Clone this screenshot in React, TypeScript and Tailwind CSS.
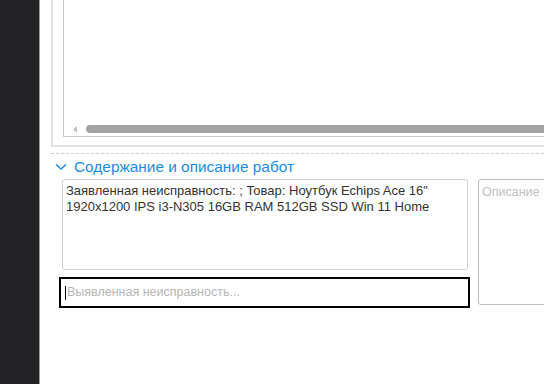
import React from 'react';

export default function App() {
  return (
    <div className="flex h-[384px] w-[544px] overflow-hidden bg-white font-['Liberation_Sans',Arial,sans-serif]">
      {/* sidebar */}
      <div className="w-[40px] shrink-0 bg-[#232326] border-r border-[#9a9a9a]" />

      <div className="flex-1 min-w-0 pl-[11px] flex flex-col">
        {/* table frame, top part scrolled out of view */}
        <div className="w-[600px] border-l-2 border-b-2 border-[#e2e2e2] pl-[10px] pb-[8px]">
          <div className="h-[137px] border-l border-b border-[#c9c9c9] flex flex-col justify-end">
            <div className="flex items-center h-[12px] mb-[1px] pl-[9px]">
              <svg width="5" height="7" viewBox="0 0 5 7" className="mr-[8px]">
                <path d="M4 0 L0 3.5 L4 7 Z" fill="#c2c2c2" />
              </svg>
              <div className="h-[8px] flex-1 rounded-full bg-[#a3a3a3]" />
            </div>
          </div>
        </div>

        <div className="mt-[6px] border-t border-dashed border-[#d0d0d0]" />

        {/* section header */}
        <div className="flex items-center h-[25px] pl-[4px] text-[#1c8ce0]">
          <svg width="12" height="8" viewBox="0 0 12 8" className="mr-[7px] mt-[1px]">
            <path d="M1 1.5 L6 6 L11 1.5" fill="none" stroke="#1c8ce0" strokeWidth="1.6" />
          </svg>
          <span className="text-[15.4px] leading-none">Содержание и описание работ</span>
        </div>

        <div className="flex">
          <div className="w-[420px] shrink-0 pl-[11px]">
            <div className="h-[91px] w-[406px] rounded-[3px] border border-[#d2d2d2] px-[3px] py-[3px] text-[13px] leading-[16px] text-[#333]">
              Заявленная неисправность: ; Товар: Ноутбук Echips Ace 16" 1920x1200 IPS i3-N305 16GB RAM 512GB SSD Win 11 Home
            </div>
            <div className="mt-[7px] -ml-[3px] h-[31px] w-[411px] border-2 border-black px-[4px] flex items-center text-[12.5px] text-[#b5b5b5]">
              <span className="w-px h-[14px] bg-black mr-px" />
              Выявленная неисправность...
            </div>
          </div>
          <div className="ml-[7px] w-[80px] shrink-0 h-[126px] rounded-[3px] border border-[#bdbdbd] px-[3px] py-[3px] text-[12.5px] text-[#c0c0c0]">
            Описание
          </div>
        </div>
      </div>
    </div>
  );
}
